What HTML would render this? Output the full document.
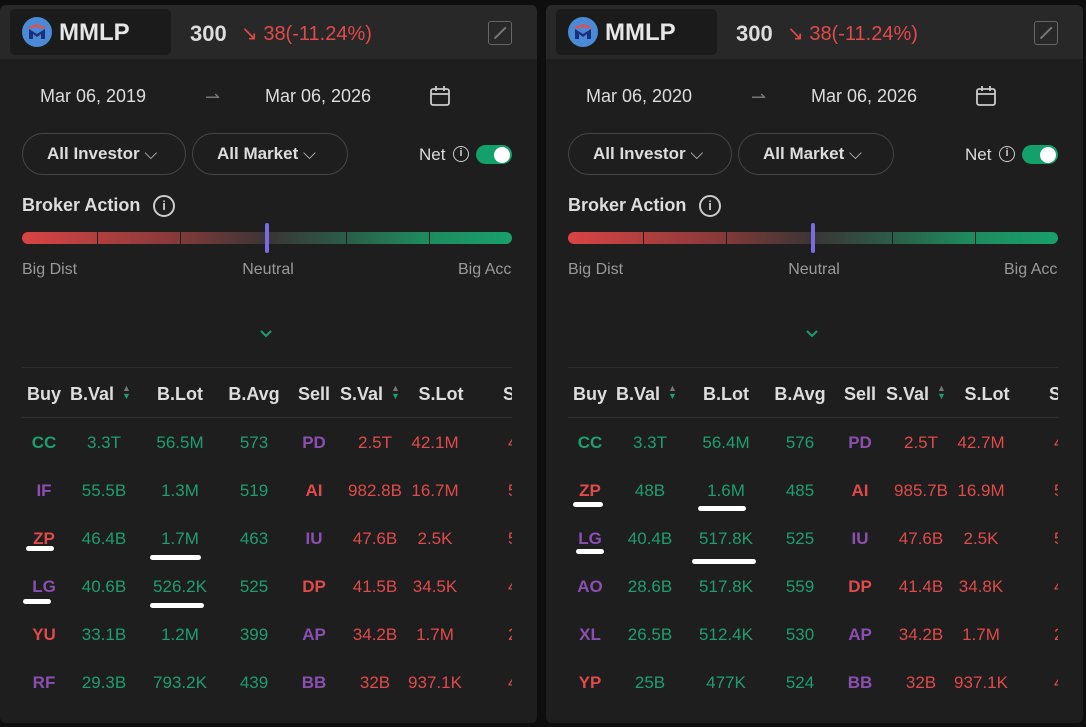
<!DOCTYPE html>
<html><head><meta charset="utf-8"><style>
*{margin:0;padding:0;box-sizing:border-box}
body{width:1086px;height:727px;background:#0e0e0e;font-family:"Liberation Sans",sans-serif;overflow:hidden;position:relative}
.p{position:absolute;top:5px;width:537px;height:718px;background:#1e1e1e;border-radius:6px;overflow:hidden}
.hd{position:absolute;left:0;top:0;width:100%;height:54px;background:#282828}
.logo{position:absolute;left:10px;top:4px;width:161px;height:46px;background:#1b1b1b;border-radius:5px}
.t{position:absolute;white-space:nowrap}
.c{transform:translateX(-50%)}
.g{color:#1e9e70}.r{color:#df4a4a}.pu{color:#8a4fb0}
.pill{position:absolute;top:128px;height:42px;border:1px solid #454545;border-radius:21px;color:#ddd;font-size:17px;font-weight:bold;line-height:40px;padding-left:24px}
.bar{position:absolute;left:22px;top:227px;width:490px;height:12px;border-radius:6px;background:linear-gradient(90deg,#d94444 0%,#8a3a3a 30%,#3a3535 50%,#2c5a48 65%,#1f8a5e 82%,#17a06c 100%)}
.tick{position:absolute;top:0;width:1px;height:12px;background:#1e1e1e}
.th{font-weight:bold;color:#ddd;font-size:18px}
.tb{position:absolute;left:0;top:365px;width:512px;height:330px;overflow:hidden}
.row{font-size:17px}
.ul{position:absolute;height:5px;background:#fff;border-radius:3px}
</style></head><body>

<div class="p" style="left:0">
<div class="hd"></div>
<div class="logo"></div>
<svg class="t" style="left:22px;top:12px" width="30" height="30" viewBox="0 0 30 30"><circle cx="15" cy="15" r="15" fill="#4a8ad6"/><path d="M7 10 L15 7 L23 10 L23 12 L15 10 L7 12Z" fill="#e05050"/><path d="M7 22 V12 L15 17 L23 12 V22 H19 V17 L15 20 L11 17 V22Z" fill="#1c2f7a"/></svg>
<div class="t" style="left:59px;top:14px;font-size:24px;font-weight:bold;color:#e6e6e6">MMLP</div>
<div class="t" style="left:190px;top:16px;font-size:22px;font-weight:bold;color:#ddd">300</div>
<div class="t r" style="left:241px;top:16px;font-size:20px">↘ 38(-11.24%)</div>
<div class="t" style="left:488px;top:16px;width:24px;height:24px;border:1.5px solid #666;border-radius:3px"><div style="position:absolute;left:3px;top:10px;width:16px;height:1.5px;background:#777;transform:rotate(-45deg)"></div></div>
<div class="t" style="left:40px;top:81px;font-size:18px;color:#ddd">Mar 06, 2019</div>
<div class="t" style="left:205px;top:82px;font-size:18px;color:#777">⇀</div>
<div class="t" style="left:265px;top:81px;font-size:18px;color:#ddd">Mar 06, 2026</div>
<svg class="t" style="left:429px;top:80px" width="22" height="22" viewBox="0 0 22 22" fill="none" stroke="#ccc" stroke-width="1.8"><rect x="2" y="4" width="18" height="16" rx="2"/><line x1="2" y1="9" x2="20" y2="9"/><line x1="7" y1="1" x2="7" y2="6"/><line x1="15" y1="1" x2="15" y2="6"/></svg>
<div class="pill" style="left:22px;width:164px">All Investor <span style="font-weight:normal;color:#ccc">⌵</span></div>
<div class="pill" style="left:192px;width:156px">All Market <span style="font-weight:normal;color:#ccc">⌵</span></div>
<div class="t" style="left:419px;top:140px;font-size:17px;color:#ddd">Net</div>
<div class="t" style="left:453px;top:141px;width:16px;height:16px;border:1.5px solid #ccc;border-radius:50%;color:#ccc;font-size:11px;text-align:center;line-height:13px;font-weight:bold">i</div>
<div class="t" style="left:476px;top:140px;width:36px;height:19px;border-radius:10px;background:#14a06a"><div style="position:absolute;right:2px;top:1.5px;width:16px;height:16px;border-radius:50%;background:#fff"></div></div>
<div class="t" style="left:22px;top:190px;font-size:18px;font-weight:bold;color:#ddd">Broker Action</div>
<div class="t" style="left:153px;top:190px;width:22px;height:22px;border:2px solid #ccc;border-radius:50%;color:#ccc;font-size:13px;text-align:center;line-height:18px;font-weight:bold">i</div>
<div class="bar"><div class="tick" style="left:75px"></div><div class="tick" style="left:158px"></div><div class="tick" style="left:324px"></div><div class="tick" style="left:407px"></div></div>
<div class="t" style="left:265px;top:218px;width:4px;height:30px;background:#7b6be0;border-radius:2px"></div>
<div class="t" style="left:22px;top:256px;font-size:16px;color:#999">Big Dist</div>
<div class="t c" style="left:268px;top:256px;font-size:16px;color:#999">Neutral</div>
<div class="t" style="left:458px;top:256px;font-size:16px;color:#999">Big Acc</div>
<svg class="t" style="left:259px;top:324px" width="14" height="10" viewBox="0 0 14 10"><path d="M2 2 L7 7 L12 2" stroke="#1e9e70" stroke-width="2" fill="none"/></svg>
<div class="t" style="left:22px;top:362px;width:490px;height:1px;background:#2c2c2c"></div>
<div class="tb">
<div class="t th c" style="left:44px;top:14px">Buy</div>
<div class="t th" style="left:70px;top:14px">B.Val</div>
<div class="t" style="left:122px;top:14px;font-size:9px;color:#777;line-height:8px">▲<br><span class="g">▼</span></div>
<div class="t th c" style="left:180px;top:14px">B.Lot</div>
<div class="t th c" style="left:254px;top:14px">B.Avg</div>
<div class="t th c" style="left:314px;top:14px">Sell</div>
<div class="t th" style="left:340px;top:14px">S.Val</div>
<div class="t" style="left:391px;top:14px;font-size:9px;color:#777;line-height:8px">▲<br><span class="g">▼</span></div>
<div class="t th c" style="left:441px;top:14px">S.Lot</div>
<div class="t th" style="left:503px;top:14px">S.</div>
<div class="t" style="left:22px;top:47px;width:490px;height:1px;background:#333"></div>
</div>
</div>

<div class="p" style="left:546px">
<div class="hd"></div>
<div class="logo"></div>
<svg class="t" style="left:22px;top:12px" width="30" height="30" viewBox="0 0 30 30"><circle cx="15" cy="15" r="15" fill="#4a8ad6"/><path d="M7 10 L15 7 L23 10 L23 12 L15 10 L7 12Z" fill="#e05050"/><path d="M7 22 V12 L15 17 L23 12 V22 H19 V17 L15 20 L11 17 V22Z" fill="#1c2f7a"/></svg>
<div class="t" style="left:59px;top:14px;font-size:24px;font-weight:bold;color:#e6e6e6">MMLP</div>
<div class="t" style="left:190px;top:16px;font-size:22px;font-weight:bold;color:#ddd">300</div>
<div class="t r" style="left:241px;top:16px;font-size:20px">↘ 38(-11.24%)</div>
<div class="t" style="left:488px;top:16px;width:24px;height:24px;border:1.5px solid #666;border-radius:3px"><div style="position:absolute;left:3px;top:10px;width:16px;height:1.5px;background:#777;transform:rotate(-45deg)"></div></div>
<div class="t" style="left:40px;top:81px;font-size:18px;color:#ddd">Mar 06, 2020</div>
<div class="t" style="left:205px;top:82px;font-size:18px;color:#777">⇀</div>
<div class="t" style="left:265px;top:81px;font-size:18px;color:#ddd">Mar 06, 2026</div>
<svg class="t" style="left:429px;top:80px" width="22" height="22" viewBox="0 0 22 22" fill="none" stroke="#ccc" stroke-width="1.8"><rect x="2" y="4" width="18" height="16" rx="2"/><line x1="2" y1="9" x2="20" y2="9"/><line x1="7" y1="1" x2="7" y2="6"/><line x1="15" y1="1" x2="15" y2="6"/></svg>
<div class="pill" style="left:22px;width:164px">All Investor <span style="font-weight:normal;color:#ccc">⌵</span></div>
<div class="pill" style="left:192px;width:156px">All Market <span style="font-weight:normal;color:#ccc">⌵</span></div>
<div class="t" style="left:419px;top:140px;font-size:17px;color:#ddd">Net</div>
<div class="t" style="left:453px;top:141px;width:16px;height:16px;border:1.5px solid #ccc;border-radius:50%;color:#ccc;font-size:11px;text-align:center;line-height:13px;font-weight:bold">i</div>
<div class="t" style="left:476px;top:140px;width:36px;height:19px;border-radius:10px;background:#14a06a"><div style="position:absolute;right:2px;top:1.5px;width:16px;height:16px;border-radius:50%;background:#fff"></div></div>
<div class="t" style="left:22px;top:190px;font-size:18px;font-weight:bold;color:#ddd">Broker Action</div>
<div class="t" style="left:153px;top:190px;width:22px;height:22px;border:2px solid #ccc;border-radius:50%;color:#ccc;font-size:13px;text-align:center;line-height:18px;font-weight:bold">i</div>
<div class="bar"><div class="tick" style="left:75px"></div><div class="tick" style="left:158px"></div><div class="tick" style="left:324px"></div><div class="tick" style="left:407px"></div></div>
<div class="t" style="left:265px;top:218px;width:4px;height:30px;background:#7b6be0;border-radius:2px"></div>
<div class="t" style="left:22px;top:256px;font-size:16px;color:#999">Big Dist</div>
<div class="t c" style="left:268px;top:256px;font-size:16px;color:#999">Neutral</div>
<div class="t" style="left:458px;top:256px;font-size:16px;color:#999">Big Acc</div>
<svg class="t" style="left:259px;top:324px" width="14" height="10" viewBox="0 0 14 10"><path d="M2 2 L7 7 L12 2" stroke="#1e9e70" stroke-width="2" fill="none"/></svg>
<div class="t" style="left:22px;top:362px;width:490px;height:1px;background:#2c2c2c"></div>
<div class="tb">
<div class="t th c" style="left:44px;top:14px">Buy</div>
<div class="t th" style="left:70px;top:14px">B.Val</div>
<div class="t" style="left:122px;top:14px;font-size:9px;color:#777;line-height:8px">▲<br><span class="g">▼</span></div>
<div class="t th c" style="left:180px;top:14px">B.Lot</div>
<div class="t th c" style="left:254px;top:14px">B.Avg</div>
<div class="t th c" style="left:314px;top:14px">Sell</div>
<div class="t th" style="left:340px;top:14px">S.Val</div>
<div class="t" style="left:391px;top:14px;font-size:9px;color:#777;line-height:8px">▲<br><span class="g">▼</span></div>
<div class="t th c" style="left:441px;top:14px">S.Lot</div>
<div class="t th" style="left:503px;top:14px">S.</div>
<div class="t" style="left:22px;top:47px;width:490px;height:1px;background:#333"></div>
</div>
</div>

<div style="position:absolute;left:0;top:7px;width:512px;height:716px;overflow:hidden">
<div class="t row g c" style="left:44px;top:426px;font-weight:bold">CC</div><div class="t row g c" style="left:104px;top:426px">3.3T</div><div class="t row g c" style="left:180px;top:426px">56.5M</div><div class="t row g c" style="left:254px;top:426px">573</div><div class="t row pu c" style="left:314px;top:426px;font-weight:bold">PD</div><div class="t row r c" style="left:375px;top:426px">2.5T</div><div class="t row r c" style="left:435px;top:426px">42.1M</div><div class="t row r" style="left:508px;top:426px">4</div>
<div class="t row pu c" style="left:44px;top:474px;font-weight:bold">IF</div><div class="t row g c" style="left:104px;top:474px">55.5B</div><div class="t row g c" style="left:180px;top:474px">1.3M</div><div class="t row g c" style="left:254px;top:474px">519</div><div class="t row r c" style="left:314px;top:474px;font-weight:bold">AI</div><div class="t row r c" style="left:375px;top:474px">982.8B</div><div class="t row r c" style="left:435px;top:474px">16.7M</div><div class="t row r" style="left:508px;top:474px">5</div>
<div class="t row r c" style="left:44px;top:522px;font-weight:bold">ZP</div><div class="t row g c" style="left:104px;top:522px">46.4B</div><div class="t row g c" style="left:180px;top:522px">1.7M</div><div class="t row g c" style="left:254px;top:522px">463</div><div class="t row pu c" style="left:314px;top:522px;font-weight:bold">IU</div><div class="t row r c" style="left:375px;top:522px">47.6B</div><div class="t row r c" style="left:435px;top:522px">2.5K</div><div class="t row r" style="left:508px;top:522px">5</div>
<div class="t row pu c" style="left:44px;top:570px;font-weight:bold">LG</div><div class="t row g c" style="left:104px;top:570px">40.6B</div><div class="t row g c" style="left:180px;top:570px">526.2K</div><div class="t row g c" style="left:254px;top:570px">525</div><div class="t row r c" style="left:314px;top:570px;font-weight:bold">DP</div><div class="t row r c" style="left:375px;top:570px">41.5B</div><div class="t row r c" style="left:435px;top:570px">34.5K</div><div class="t row r" style="left:508px;top:570px">4</div>
<div class="t row r c" style="left:44px;top:618px;font-weight:bold">YU</div><div class="t row g c" style="left:104px;top:618px">33.1B</div><div class="t row g c" style="left:180px;top:618px">1.2M</div><div class="t row g c" style="left:254px;top:618px">399</div><div class="t row pu c" style="left:314px;top:618px;font-weight:bold">AP</div><div class="t row r c" style="left:375px;top:618px">34.2B</div><div class="t row r c" style="left:435px;top:618px">1.7M</div><div class="t row r" style="left:508px;top:618px">2</div>
<div class="t row pu c" style="left:44px;top:666px;font-weight:bold">RF</div><div class="t row g c" style="left:104px;top:666px">29.3B</div><div class="t row g c" style="left:180px;top:666px">793.2K</div><div class="t row g c" style="left:254px;top:666px">439</div><div class="t row pu c" style="left:314px;top:666px;font-weight:bold">BB</div><div class="t row r c" style="left:375px;top:666px">32B</div><div class="t row r c" style="left:435px;top:666px">937.1K</div><div class="t row r" style="left:508px;top:666px">4</div>
</div>
<div class="ul" style="left:26px;top:546px;width:28px"></div>
<div class="ul" style="left:150px;top:555px;width:51px"></div>
<div class="ul" style="left:23px;top:599px;width:28px"></div>
<div class="ul" style="left:150px;top:603px;width:54px"></div>

<div style="position:absolute;left:546px;top:7px;width:512px;height:716px;overflow:hidden">
<div class="t row g c" style="left:44px;top:426px;font-weight:bold">CC</div><div class="t row g c" style="left:104px;top:426px">3.3T</div><div class="t row g c" style="left:180px;top:426px">56.4M</div><div class="t row g c" style="left:254px;top:426px">576</div><div class="t row pu c" style="left:314px;top:426px;font-weight:bold">PD</div><div class="t row r c" style="left:375px;top:426px">2.5T</div><div class="t row r c" style="left:435px;top:426px">42.7M</div><div class="t row r" style="left:508px;top:426px">4</div>
<div class="t row r c" style="left:44px;top:474px;font-weight:bold">ZP</div><div class="t row g c" style="left:104px;top:474px">48B</div><div class="t row g c" style="left:180px;top:474px">1.6M</div><div class="t row g c" style="left:254px;top:474px">485</div><div class="t row r c" style="left:314px;top:474px;font-weight:bold">AI</div><div class="t row r c" style="left:375px;top:474px">985.7B</div><div class="t row r c" style="left:435px;top:474px">16.9M</div><div class="t row r" style="left:508px;top:474px">5</div>
<div class="t row pu c" style="left:44px;top:522px;font-weight:bold">LG</div><div class="t row g c" style="left:104px;top:522px">40.4B</div><div class="t row g c" style="left:180px;top:522px">517.8K</div><div class="t row g c" style="left:254px;top:522px">525</div><div class="t row pu c" style="left:314px;top:522px;font-weight:bold">IU</div><div class="t row r c" style="left:375px;top:522px">47.6B</div><div class="t row r c" style="left:435px;top:522px">2.5K</div><div class="t row r" style="left:508px;top:522px">5</div>
<div class="t row pu c" style="left:44px;top:570px;font-weight:bold">AO</div><div class="t row g c" style="left:104px;top:570px">28.6B</div><div class="t row g c" style="left:180px;top:570px">517.8K</div><div class="t row g c" style="left:254px;top:570px">559</div><div class="t row r c" style="left:314px;top:570px;font-weight:bold">DP</div><div class="t row r c" style="left:375px;top:570px">41.4B</div><div class="t row r c" style="left:435px;top:570px">34.8K</div><div class="t row r" style="left:508px;top:570px">4</div>
<div class="t row pu c" style="left:44px;top:618px;font-weight:bold">XL</div><div class="t row g c" style="left:104px;top:618px">26.5B</div><div class="t row g c" style="left:180px;top:618px">512.4K</div><div class="t row g c" style="left:254px;top:618px">530</div><div class="t row pu c" style="left:314px;top:618px;font-weight:bold">AP</div><div class="t row r c" style="left:375px;top:618px">34.2B</div><div class="t row r c" style="left:435px;top:618px">1.7M</div><div class="t row r" style="left:508px;top:618px">2</div>
<div class="t row r c" style="left:44px;top:666px;font-weight:bold">YP</div><div class="t row g c" style="left:104px;top:666px">25B</div><div class="t row g c" style="left:180px;top:666px">477K</div><div class="t row g c" style="left:254px;top:666px">524</div><div class="t row pu c" style="left:314px;top:666px;font-weight:bold">BB</div><div class="t row r c" style="left:375px;top:666px">32B</div><div class="t row r c" style="left:435px;top:666px">937.1K</div><div class="t row r" style="left:508px;top:666px">4</div>
</div>
<div class="ul" style="left:573px;top:502px;width:30px"></div>
<div class="ul" style="left:698px;top:506px;width:48px"></div>
<div class="ul" style="left:576px;top:549px;width:28px"></div>
<div class="ul" style="left:692px;top:559px;width:64px"></div>
</body></html>
